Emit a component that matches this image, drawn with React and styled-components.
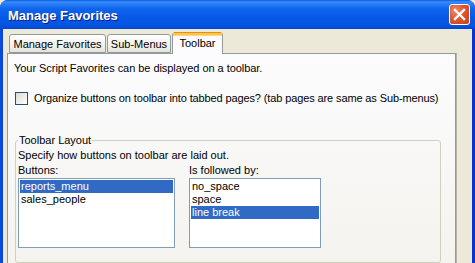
import React from 'react';
import styled, { createGlobalStyle } from 'styled-components';

const GlobalStyle = createGlobalStyle`
	html, body {
		margin: 0;
		padding: 0;
		background: #ece9d8;
	}
	body {
		font-family: 'Liberation Sans', Arial, sans-serif;
		font-size: 11px;
		color: #000;
	}
`;

const tabs = [
	{ label: 'Manage Favorites', width: 97 },
	{ label: 'Sub-Menus', width: 64 },
	{ label: 'Toolbar', width: 51, active: true },
];

const buttons = [
	{ name: 'reports_menu', selected: true },
	{ name: 'sales_people' },
];

const spacing = [
	{ name: 'no_space' },
	{ name: 'space' },
	{ name: 'line break', selected: true },
];

const App = () => {
	return (
		<Window>
			<GlobalStyle />
			<TitleBar>
				<Title>Manage Favorites</Title>
				<CloseButton aria-label="Close">
					<svg width="13" height="13" viewBox="0 0 13 13">
						<path
							d="M2 2 L11 11 M11 2 L2 11"
							stroke="#fff"
							strokeWidth="2.4"
							strokeLinecap="square"
						/>
					</svg>
				</CloseButton>
			</TitleBar>

			<Body>
				<TabRow>
					{tabs.map((t) => (
						<Tab key={t.label} $w={t.width} $active={t.active}>
							{t.label}
						</Tab>
					))}
				</TabRow>

				<Panel>
					<Intro>Your Script Favorites can be displayed on a toolbar.</Intro>

					<CheckRow>
						<CheckBox />
						<CheckLabel>
							Organize buttons on toolbar into tabbed pages? (tab pages are
							same as Sub-menus)
						</CheckLabel>
					</CheckRow>

					<Group>
						<Legend>Toolbar Layout</Legend>
						<Line>Specify how buttons on toolbar are laid out.</Line>
						<Columns>
							<Column $w={157}>
								<Line>Buttons:</Line>
								<ListBox>
									{buttons.map((b) => (
										<Item key={b.name} $selected={b.selected}>
											{b.name}
										</Item>
									))}
								</ListBox>
							</Column>
							<Column $w={132}>
								<Line>Is followed by:</Line>
								<ListBox>
									{spacing.map((s) => (
										<Item key={s.name} $selected={s.selected}>
											{s.name}
										</Item>
									))}
								</ListBox>
							</Column>
						</Columns>
					</Group>
				</Panel>
			</Body>
		</Window>
	);
};

const Window = styled.div`
	width: 475px;
	height: 263px;
	overflow: hidden;
	display: flex;
	flex-direction: column;
	background: linear-gradient(to right, #0a4fe0 0, #0842d4 3px, #0637c8 100%);
	border-radius: 8px 8px 0 0;
`;

const TitleBar = styled.div`
	height: 29px;
	flex: none;
	display: flex;
	align-items: center;
	justify-content: space-between;
	padding: 0 5px 0 8px;
	background: linear-gradient(
		to bottom,
		#0a5ce8 0%,
		#3d8ff7 7%,
		#2a80f7 12%,
		#0f65ed 30%,
		#0558e6 60%,
		#0454e2 85%,
		#0448d0 100%
	);
`;

const Title = styled.span`
	color: #fff;
	font-family: 'Liberation Sans', Arial, sans-serif;
	font-weight: bold;
	font-size: 13px;
	text-shadow: 1px 1px 0 #0a1f80;
	padding-top: 1px;
`;

const CloseButton = styled.div`
	width: 19px;
	height: 19px;
	border: 1px solid #fff;
	border-radius: 3px;
	display: flex;
	align-items: center;
	justify-content: center;
	background: radial-gradient(circle at 30% 30%, #f08a6a 0%, #e0562c 45%, #c8401c 100%);
`;

const Body = styled.div`
	flex: 1;
	margin: 0 3px;
	background: #ece9d8;
	padding: 3px 16px 0 4px;
	display: flex;
	flex-direction: column;
`;

const TabRow = styled.div`
	height: 21px;
	display: flex;
	align-items: flex-start;
	padding-left: 2px;
`;

const Tab = styled.div`
	box-sizing: border-box;
	width: ${({ $w }) => $w}px;
	height: ${({ $active }) => ($active ? 22 : 19)}px;
	margin-top: ${({ $active }) => ($active ? 0 : 2)}px;
	margin-right: ${({ $active }) => ($active ? 0 : 1)}px;
	position: relative;
	z-index: ${({ $active }) => ($active ? 2 : 0)};
	display: flex;
	align-items: center;
	justify-content: center;
	padding-bottom: ${({ $active }) => ($active ? 3 : 0)}px;
	border: 1px solid #919b9c;
	border-bottom: ${({ $active }) => ($active ? 'none' : '1px solid #919b9c')};
	border-top: ${({ $active }) => ($active ? '3px solid #ffc73c' : '1px solid #919b9c')};
	border-radius: 3px 3px 0 0;
	background: ${({ $active }) =>
		$active ? '#fcfcfe' : 'linear-gradient(to bottom, #fefefe, #f0efea 70%, #e3e2da)'};
	box-shadow: ${({ $active }) => ($active ? 'inset 0 1px 0 #f8d78c' : 'none')};
	white-space: nowrap;

	&::before {
		content: '';
		display: ${({ $active }) => ($active ? 'block' : 'none')};
		position: absolute;
		top: -3px;
		left: 1px;
		right: 1px;
		height: 1px;
		background: #e68b2c;
	}
`;

const Panel = styled.div`
	width: 449px;
	box-sizing: border-box;
	flex: 1;
	border: 1px solid #919b9c;
	border-bottom: none;
	box-shadow: 1px 0 0 #b6b4a8;
	background: linear-gradient(to bottom, #fcfcfe, #f4f3ee);
	padding: 8px 14px 0 6px;
	display: flex;
	flex-direction: column;
`;

const Intro = styled.div`
	line-height: 13px;
	letter-spacing: -0.05px;
`;

const CheckRow = styled.div`
	display: flex;
	align-items: center;
	margin-top: 17px;
	line-height: 13px;
	gap: 6px;
`;

const CheckLabel = styled.span`
	white-space: nowrap;
	letter-spacing: -0.12px;
`;

const CheckBox = styled.span`
	flex: none;
	box-sizing: border-box;
	width: 13px;
	height: 13px;
	margin-left: 1px;
	border: 1px solid #1c5180;
	background: linear-gradient(135deg, #dcdbd5, #f4f4f0 70%, #ffffff);
`;

const Group = styled.fieldset`
	margin: 29px 0 0 1px;
	width: 426px;
	box-sizing: border-box;
	border: 1px solid #d0d0bf;
	border-radius: 3px;
	padding: 1px 2px 0 2px;
	min-width: 0;
	flex: 1;
`;

const Legend = styled.legend`
	padding: 0 1px;
	margin-left: 0;
	line-height: 13px;
	font-size: 11px;
`;

const Line = styled.div`
	line-height: 15px;
	white-space: nowrap;
`;

const Columns = styled.div`
	display: flex;
	gap: 14px;
`;

const Column = styled.div`
	width: ${({ $w }) => $w}px;
	display: flex;
	flex-direction: column;
`;

const ListBox = styled.div`
	box-sizing: border-box;
	height: 70px;
	border: 1px solid #7f9db9;
	background: #fff;
	padding: 1px;
`;

const Item = styled.div`
	height: 13px;
	line-height: 13px;
	padding-left: 1px;
	white-space: nowrap;
	background: ${({ $selected }) => ($selected ? '#316ac5' : 'transparent')};
	color: ${({ $selected }) => ($selected ? '#fff' : '#000')};
`;

export default App;
